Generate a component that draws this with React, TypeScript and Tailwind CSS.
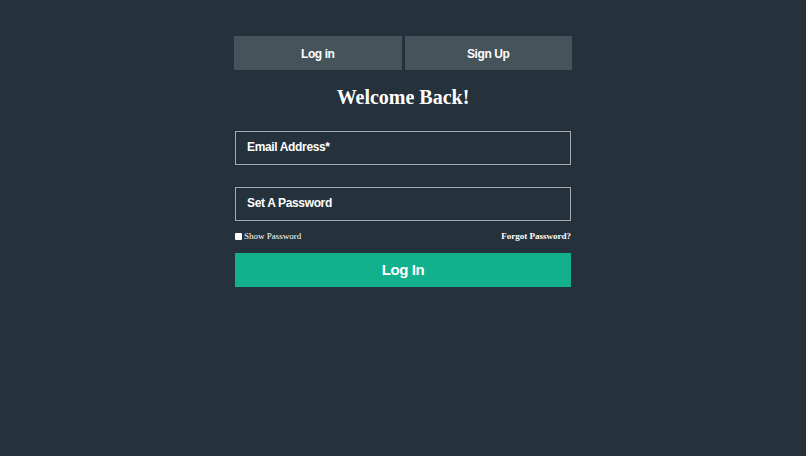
import React from "react";

export default function App() {
  return (
    <div className="w-[806px] h-[456px] bg-[#25313b] overflow-hidden">
      <div className="w-[338px] mx-auto pt-[36px]">
        <div className="flex gap-[3px] h-[34px]" style={{ fontFamily: '"Liberation Sans", Arial, sans-serif' }}>
          <button className="flex-1 bg-[#45535b] text-white text-[12px] tracking-[-0.4px] font-bold flex items-center justify-center pt-[1px]">Log in</button>
          <button className="flex-1 bg-[#45535b] text-white text-[12px] tracking-[-0.4px] font-bold flex items-center justify-center pt-[1px]">Sign Up</button>
        </div>
        <h1 className="text-white text-center text-[20px] font-bold mt-[14px] leading-[26px]" style={{ fontFamily: '"Liberation Serif", "Times New Roman", serif' }}>
          Welcome Back!
        </h1>
        <div className="px-[1px]" style={{ fontFamily: '"Liberation Sans", Arial, sans-serif' }}>
          <div className="mt-[21px] h-[34px] border border-[#a3abb0] flex items-center px-[11px] pb-[2px] text-white text-[12px] tracking-[-0.35px] font-bold">
            Email Address*
          </div>
          <div className="mt-[22px] h-[34px] border border-[#a3abb0] flex items-center px-[11px] pb-[2px] text-white text-[12px] tracking-[-0.35px] font-bold">
            Set A Password
          </div>
          <div className="mt-[10px] h-[12px] flex items-center justify-between text-white text-[9px]" style={{ fontFamily: '"Liberation Serif", "Times New Roman", serif' }}>
            <label className="flex items-center gap-[2px]">
              <span className="w-[7px] h-[7px] bg-white rounded-[1px] inline-block mb-[2px]"></span>
              <span>Show Password</span>
            </label>
            <span className="font-bold">Forgot Password?</span>
          </div>
          <button className="mt-[10px] w-full h-[34px] bg-[#12b08c] text-white text-[15px] tracking-[-0.4px] font-bold flex items-center justify-center">
            Log In
          </button>
        </div>
      </div>
    </div>
  );
}
